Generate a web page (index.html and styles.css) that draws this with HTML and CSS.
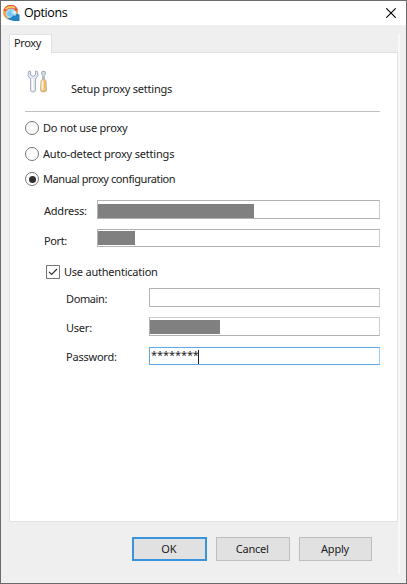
FILE: index.html
```html
<!DOCTYPE html>
<html lang="en">
<head>
<meta charset="utf-8">
<title>Options</title>
<link rel="stylesheet" href="styles.css">
</head>
<body>
<div class="window">
  <header class="titlebar">
    <svg class="logo" width="17" height="17" viewBox="0 0 17 17">
      <circle cx="7.500" cy="7.500" r="7.400" fill="#f8a047"/>
      <path d="M.5 6A7.400 7.400 0 0 1 15 5L12.500 7A6 6 0 0 0 3 6Z" fill="#e95b3d"/>
      <path d="M2.500 4Q7 .5 12 3" fill="none" stroke="#f8ce62" stroke-width="1.800"/>
      <circle cx="8" cy="8.600" r="5.200" fill="#a5ddf7"/>
      <path d="M4 10Q5 5 9 5Q7 7 10 9L7 12Z" fill="#75c8ef"/>
      <path d="M4 13Q8 14 10 10L12 11L14 8.500L16.500 9.500V16H11Q7 16 4 13Z" fill="#2583c5"/>
      <path d="M9 7L13 6L12 9Z" fill="#e9f7ff"/>
    </svg>
    <span class="title">Options</span>
    <svg class="close" width="10" height="10" viewBox="0 0 10 10"><path d="M.3.3 9.7 9.7M9.7.3.3 9.7" stroke="#000" stroke-width="1.1"/></svg>
  </header>
  <main class="content">
    <div class="tab"><span>Proxy</span></div>
    <section class="panel">
      <div class="heading">
        <svg width="22" height="24" viewBox="0 0 22 24">
          <path d="M1.5 1.5Q-.5 6 3.5 9V20Q3.5 22 6 22T8.500 20V9Q12.500 6 10.500 1.500L8.500 1V5L6 6.500L3.500 5V1Z" fill="#e4e8f1" stroke="#a5adbf"/>
          <path d="M5.500 9V20" stroke="#fff" stroke-width="1.500"/>
          <path d="M15 1.500H18L18.500 4L17.300 5.500V9H15.700V5.500L14.500 4Z" fill="#d5dce9" stroke="#8f9bb2" stroke-width=".8"/>
          <path d="M14 10.500Q16.500 7.500 19 10.500L19.500 20Q19.500 22 16.500 22T13.500 20Z" fill="#f5bd62" stroke="#b5a9a0" stroke-width=".8"/>
          <path d="M15.500 10.500V20" stroke="#fff0d7" stroke-width="2"/>
        </svg>
        <span class="setup">Setup proxy settings</span>
      </div>
      <div class="choices">
        <div class="choice"><i class="radio"></i><span class="c1">Do not use proxy</span></div>
        <div class="choice"><i class="radio"></i><span class="c2">Auto-detect proxy settings</span></div>
        <div class="choice"><i class="radio on"></i><span class="c3">Manual proxy configuration</span></div>
      </div>
      <div class="row address"><span class="label">Address:</span><div class="field"><b class="mask"></b></div></div>
      <div class="row port"><span class="label">Port:</span><div class="field"><b class="mask"></b></div></div>
      <div class="auth">
        <svg width="14" height="14" viewBox="0 0 14 14"><path d="M.5.5H13.500V13.500H.5Z" fill="#fff" stroke="#777"/><path d="M3 6.800 5.600 9.400 11 4" fill="none" stroke="#333" stroke-width="1.200"/></svg>
        <span>Use authentication</span>
      </div>
      <div class="row sub domain"><span class="label">Domain:</span><div class="field"></div></div>
      <div class="row sub user"><span class="label">User:</span><div class="field"><b class="mask"></b></div></div>
      <div class="row sub password"><span class="label">Password:</span><div class="field focus"><span class="stars">********</span><i class="caret"></i></div></div>
    </section>
    <footer class="actions">
      <button class="default">OK</button><button>Cancel</button><button class="apply">Apply</button>
    </footer>
  </main>
</div>
</body>
</html>
```
FILE: styles.css
```css
* { box-sizing: border-box; }
body { margin: 0; font: 11px/14px "Noto Sans", sans-serif; letter-spacing: -.22px; color: #222; }
.window { width: 407px; height: 584px; border: 1px solid #6b6b6b; background: #efefef; }
.titlebar { height: 24px; background: #fff; display: flex; align-items: center; padding: 0 10px 0 2px; }
.title { margin-left: 4px; font: 12.5px/20px "Open Sans", sans-serif; color: #000; letter-spacing: -.42px; }
.close { margin-left: auto; margin-top: -1px; }
.content { margin: 9px 0 0 8px; width: 391px; height: 540px; border-right: 2px solid #f8f8f8; }
.tab { width: 43px; height: 19px; background: #fff; border: 1px solid #e1e1e1; border-bottom: 0; padding: 1px 0 0 4px; position: relative; z-index: 1; letter-spacing: -.35px; }
.panel { width: 389px; height: 470px; margin-top: -1px; background: #fff; border: 1px solid #e1e1e1; padding: 0 17px 0 15px; }
.heading { height: 59px; border-bottom: 1px solid #c0c0c0; display: flex; padding: 17px 0 0 2px; }
.setup { margin: 12px 0 0 22px; }
.choices { height: 88px; padding-top: 9px; }
.choice { display: flex; align-items: center; height: 14px; margin-bottom: 11.5px; }
.c2 { letter-spacing: -.19px; }
.c3 { letter-spacing: -.42px; }
.radio { width: 14px; height: 14px; border: 1px solid #777; border-radius: 50%; margin-right: 4px; display: grid; place-items: center; }
.radio.on::after { content: ""; width: 7px; height: 7px; border-radius: 50%; background: #303030; }
.row { display: flex; align-items: flex-start; height: 19px; padding-left: 19px; }
.label { width: 53px; white-space: nowrap; margin-top: 4px; }
.domain .label, .port .label { letter-spacing: -.4px; }
.field { flex: 1; height: 19px; border: 1px solid #b2b2b2; border-right-color: #cecece; display: flex; }
.mask { display: block; background: #808080; height: 14px; }
.address .mask { width: 156px; margin-top: 3px; }
.port { margin-top: 10px; }
.port .label { margin-top: 5px; }
.port .field { height: 18px; }
.port .mask { width: 37px; margin-top: 1px; }
.auth { display: flex; height: 14px; margin: 17px 0 9px 21px; }
.auth span { margin-left: 4px; }
.sub { padding-left: 41px; }
.sub .label { width: 83px; }
.user { margin-top: 10px; }
.user .field { border-top-color: #cecece; }
.user .mask { width: 70px; margin-top: 2px; }
.password { margin-top: 11px; }
.password .label { margin-top: 3px; }
.field.focus { height: 18px; border-color: #5ca8e6; border-right-color: #a5cff2; }
.stars { padding-left: 1px; line-height: 14px; letter-spacing: -.08px; }
.caret { width: 1px; height: 14px; margin: 2px 0 0 -1px; background: #222; }
.actions { display: flex; gap: 9px; padding: 15px 0 0 123px; }
button { width: 74.5px; height: 24px; padding: 0 1px 0 0; border: 1px solid #bebebe; background: #e1e1e1; font: inherit; letter-spacing: -.22px; color: #222; }
button.default { border: 2px solid #3992dc; }
button.apply { width: 73px; }
```
